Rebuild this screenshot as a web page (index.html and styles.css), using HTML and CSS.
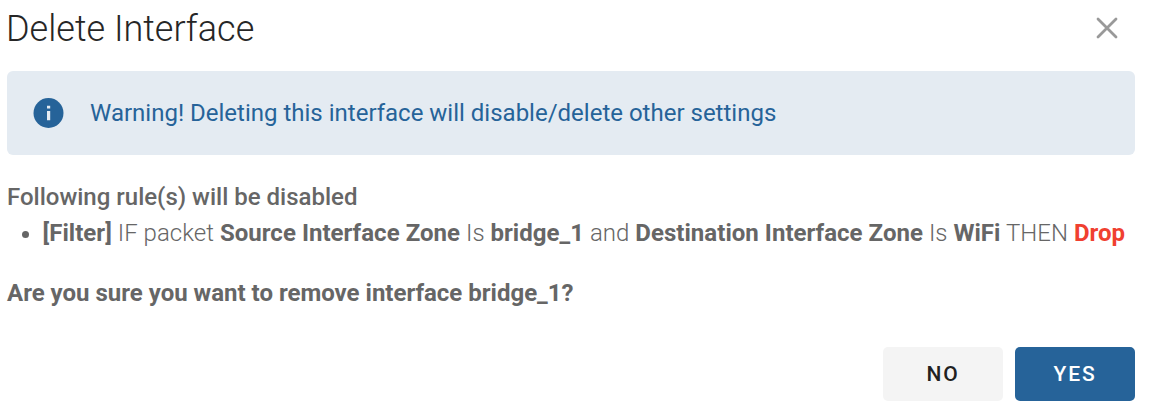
FILE: index.html
```
<!DOCTYPE html>
<html lang="en">
<head>
    <meta charset="utf-8">
    <title>Delete Interface</title>
    <link rel="stylesheet" href="styles.css">
</head>
<body>
    <div class="dialog">
        <div class="dialog-header">
            <h1>Delete Interface</h1>
            <button class="close" aria-label="Close">
                <svg width="22" height="22" viewBox="0 0 22 22"><path d="M2 2L20 20M20 2L2 20"/></svg>
            </button>
        </div>
        <div class="alert">
            <svg class="alert-icon" width="31" height="30" viewBox="0 0 31 30">
                <circle cx="15.5" cy="15" r="15"/>
                <path d="M14 7.7h3.2v2.8H14zM14 13h3.2v9.3H14z"/>
            </svg>
            <span>Warning! Deleting this interface will disable/delete other settings</span>
        </div>
        <div class="content">
            <p class="intro">Following rule(s) will be disabled</p>
            <ul>
                <li><b>[Filter]</b> IF packet <b>Source Interface Zone</b> Is <b>bridge_1</b> and <b>Destination Interface Zone</b> Is <b>WiFi</b> THEN <b class="drop">Drop</b></li>
            </ul>
            <p class="question">Are you sure you want to remove interface bridge_1?</p>
        </div>
        <div class="actions">
            <button class="btn">NO</button>
            <button class="btn btn-primary">YES</button>
        </div>
    </div>
</body>
</html>
```

FILE: styles.css
```
* {
    box-sizing: border-box;
}

body {
    margin: 0;
    background: #fff;
    font-family: Roboto, sans-serif;
    font-size: 24px;
    color: #666;
}

.dialog {
    padding: 0 16px 0 7px;
}

.dialog-header {
    display: flex;
    justify-content: space-between;
    align-items: center;
    height: 57px;
    padding-right: 17px;
}

h1 {
    margin: 0 0 0 -1px;
    font-size: 36px;
    font-weight: 300;
    color: #262626;
}

.close {
    display: flex;
    padding: 0;
    margin-bottom: 1px;
    border: none;
    background: none;
    cursor: pointer;
}

.close path {
    stroke: #999;
    stroke-width: 2.8;
    stroke-linecap: round;
}

.alert {
    display: flex;
    align-items: center;
    gap: 26px;
    height: 84px;
    margin-top: 14px;
    padding: 0 0 1px 26px;
    border-radius: 6px;
    background: #e4ebf2;
    color: #266399;
}

.alert-icon circle {
    fill: #266399;
}

.alert-icon path {
    fill: #e4ebf2;
}

.content {
    margin-top: 24px;
    line-height: 36px;
    white-space: nowrap;
}

.content p,
.content ul {
    margin: 0;
}

.content ul {
    padding-left: 35.5px;
    font-weight: 300;
    letter-spacing: 0.035px;
}

.intro {
    font-weight: 500;
}

.content .question {
    margin-top: 24px;
    font-weight: 700;
}

.content b {
    font-weight: 700;
}

.content .drop {
    color: #f04030;
}

.actions {
    display: flex;
    justify-content: flex-end;
    gap: 12px;
    margin-top: 36px;
}

.btn {
    width: 120px;
    height: 54px;
    padding: 0;
    border: none;
    border-radius: 5px;
    background: #f4f4f4;
    color: #212121;
    font-family: inherit;
    font-size: 21px;
    font-weight: 500;
    letter-spacing: 1.8px;
    cursor: pointer;
}

.btn-primary {
    background: #266399;
    color: #fff;
}
```
